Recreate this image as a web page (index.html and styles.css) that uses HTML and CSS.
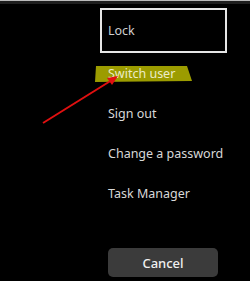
FILE: index.html
```html
<!DOCTYPE html>
<html>
<head>
<meta charset="utf-8">
<link rel="stylesheet" href="styles.css">
</head>
<body>
<div class="topbar"></div>
<div class="screen">
  <div class="menu">
    <div class="lock">Lock</div>
    <div class="item switch"><span class="hl"></span><span class="label">Switch user</span></div>
    <div class="item">Sign out</div>
    <div class="item">Change a password</div>
    <div class="item">Task Manager</div>
  </div>
  <button class="cancel">Cancel</button>
</div>
<svg class="arrow" width="250" height="281" viewBox="0 0 250 281">
  <line x1="43" y1="123" x2="112" y2="80" stroke="#e01010" stroke-width="2"/>
  <polygon points="118,76 107,78 112,85" fill="#e01010"/>
</svg>
</body>
</html>
```
FILE: styles.css
```css
html, body {
  margin: 0;
  padding: 0;
  background: #000;
  width: 250px;
  height: 281px;
  overflow: hidden;
  font-family: "Noto Sans", "Open Sans", sans-serif;
}
.topbar {
  height: 3px;
  border-top: 1px solid #bbb;
  background: #1e1e1e;
}
.screen {
  position: relative;
  padding-left: 100px;
  padding-top: 4px;
}
.menu {
  display: flex;
  flex-direction: column;
}
.lock {
  width: 123px;
  height: 41px;
  border: 2px solid #e6e6e6;
  box-sizing: content-box;
  color: #cfcfcf;
  font-size: 12.5px;
  line-height: 41px;
  text-indent: 6px;
}
.item {
  color: #d8d8d8;
  font-size: 12.5px;
  height: 40px;
  line-height: 16px;
  padding-left: 8px;
  padding-top: 11px;
  box-sizing: border-box;
}
.switch {
  position: relative;
  margin-top: 2px;
}
.hl {
  position: absolute;
  left: -5px;
  top: 11px;
  width: 97px;
  height: 16px;
  background: #9c9c00;
  clip-path: polygon(1px 0, 92px 0, 97px 15px, 0 16px);
}
.label {
  position: relative;
  color: #ececc8;
}
.cancel {
  display: block;
  margin: 33px 0 0 8px;
  width: 110px;
  height: 29px;
  border: none;
  border-radius: 5px;
  background: #3b3b3b;
  color: #f0f0f0;
  font-family: "Noto Sans", "Open Sans", sans-serif;
  font-size: 13px;
  font-weight: 500;
}
.arrow {
  position: absolute;
  left: 0;
  top: 0;
}
```
